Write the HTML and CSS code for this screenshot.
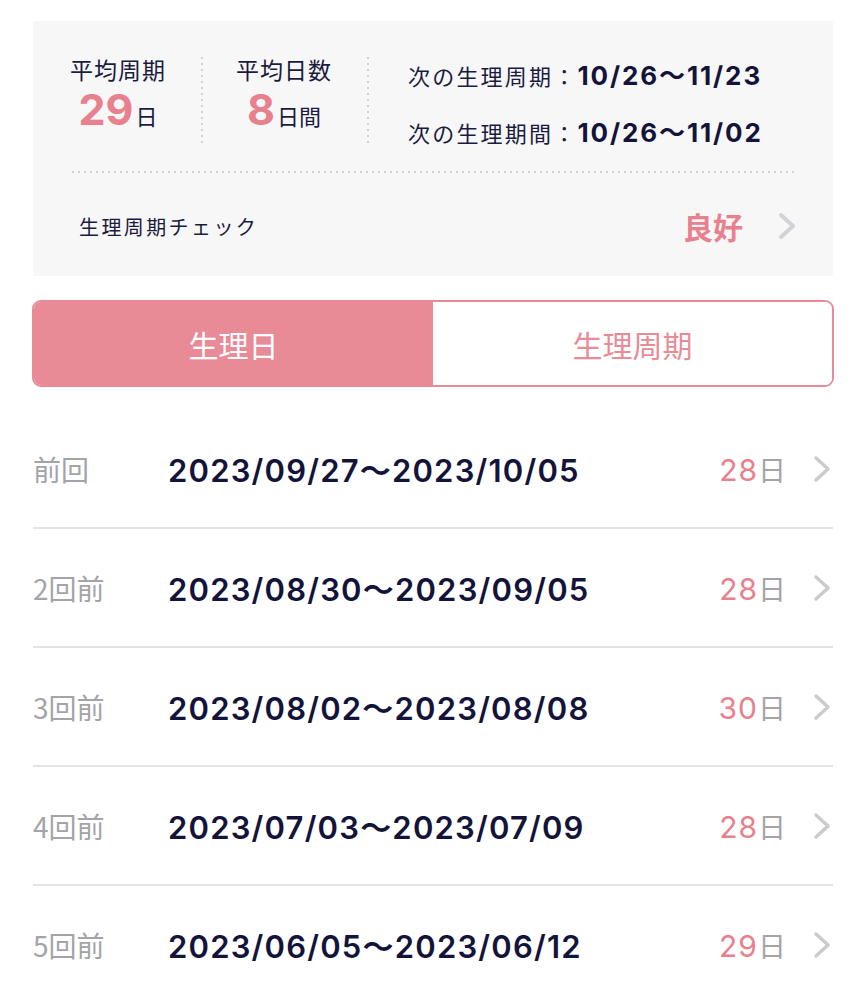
FILE: index.html
```html
<!DOCTYPE html>
<html lang="ja">
  <head>
    <meta charset="UTF-8" />
    <meta name="viewport" content="width=device-width, initial-scale=1.0" />
    <title>生理日</title>
    <link rel="stylesheet" href="styles.css">
  </head>
  <body>
    <div class="page">

      <section class="summary">
        <div class="summary-top">
          <div class="stat">
            <div class="stat-label">平均周期</div>
            <div class="stat-value"><span class="num">29</span>日</div>
          </div>
          <div class="vdots"></div>
          <div class="stat">
            <div class="stat-label">平均日数</div>
            <div class="stat-value"><span class="num">8</span>日間</div>
          </div>
          <div class="vdots"></div>
          <div class="next">
            <div class="next-row"><span class="next-label">次の生理周期：</span><span class="next-date">10/26〜11/23</span></div>
            <div class="next-row"><span class="next-label">次の生理期間：</span><span class="next-date">10/26〜11/02</span></div>
          </div>
        </div>
        <div class="hdots"></div>
        <div class="check">
          <span class="check-label">生理周期チェック</span>
          <span class="check-result">良好</span>
          <svg class="chevron" width="20" height="28" viewBox="0 0 20 28"><polyline points="4,3 16,14 4,25" /></svg>
        </div>
      </section>

      <div class="tabs">
        <div class="tab active">生理日</div>
        <div class="tab">生理周期</div>
      </div>

      <ul class="history">
        <li class="row">
          <span class="row-label">前回</span>
          <span class="row-date">2023/09/27〜2023/10/05</span>
          <span class="row-days"><span class="num">28</span>日</span>
          <svg class="chevron" width="18" height="28" viewBox="0 0 18 28"><polyline points="3,3 15,14 3,25" /></svg>
        </li>
        <li class="row">
          <span class="row-label">2回前</span>
          <span class="row-date">2023/08/30〜2023/09/05</span>
          <span class="row-days"><span class="num">28</span>日</span>
          <svg class="chevron" width="18" height="28" viewBox="0 0 18 28"><polyline points="3,3 15,14 3,25" /></svg>
        </li>
        <li class="row">
          <span class="row-label">3回前</span>
          <span class="row-date">2023/08/02〜2023/08/08</span>
          <span class="row-days"><span class="num">30</span>日</span>
          <svg class="chevron" width="18" height="28" viewBox="0 0 18 28"><polyline points="3,3 15,14 3,25" /></svg>
        </li>
        <li class="row">
          <span class="row-label">4回前</span>
          <span class="row-date">2023/07/03〜2023/07/09</span>
          <span class="row-days"><span class="num">28</span>日</span>
          <svg class="chevron" width="18" height="28" viewBox="0 0 18 28"><polyline points="3,3 15,14 3,25" /></svg>
        </li>
        <li class="row">
          <span class="row-label">5回前</span>
          <span class="row-date">2023/06/05〜2023/06/12</span>
          <span class="row-days"><span class="num">29</span>日</span>
          <svg class="chevron" width="18" height="28" viewBox="0 0 18 28"><polyline points="3,3 15,14 3,25" /></svg>
        </li>
      </ul>

    </div>
  </body>
</html>
```

FILE: styles.css
```css
body {
  margin: 0;
  background: #ffffff;
  font-family: "Noto Sans CJK JP", sans-serif;
  color: #1b1b3f;
}

.page {
  width: 800px;
  padding: 21px 0 0 33px;
}

/* summary card */
.summary {
  background: #f7f7f7;
  padding: 34px 38px 20px 37px;
}

.summary-top {
  display: flex;
  align-items: flex-start;
  height: 92px;
}

.stat {
  display: flex;
  flex-direction: column;
  align-items: center;
}

.stat-label {
  font-size: 23px;
  line-height: 28px;
  letter-spacing: 1px;
}

.stat-value {
  font-size: 22px;
  line-height: 44px;
  margin-top: 4px;
}

.stat-value .num {
  font-family: "Inter", "Liberation Sans", sans-serif;
  font-weight: 700;
  font-size: 43px;
  color: #e8808e;
  margin-right: 2px;
}

.vdots {
  width: 2px;
  height: 88px;
  margin: 2px 33px 0 35px;
  background: repeating-linear-gradient(to bottom, #d2d2d6 0 2px, transparent 2px 6px);
}

.next {
  margin-left: 6px;
  margin-top: 4px;
}

.next-row {
  display: flex;
  align-items: baseline;
  line-height: 32px;
  margin-bottom: 24px;
}

.next-label {
  font-size: 22px;
  letter-spacing: 2.2px;
}

.next-date {
  font-family: "Inter", "Liberation Sans", "Noto Sans CJK JP", sans-serif;
  font-weight: 700;
  font-size: 26px;
  letter-spacing: 1.9px;
  color: #14143a;
}

.hdots {
  height: 2px;
  margin: 24px 0 0 2px;
  background: repeating-linear-gradient(to right, #d2d2d6 0 2px, transparent 2px 6px);
}

.check {
  display: flex;
  align-items: center;
  height: 60px;
  margin-top: 23px;
  padding-left: 9px;
}

.check-label {
  flex: 1;
  font-size: 20px;
  letter-spacing: 2.4px;
}

.check-result {
  font-size: 30px;
  font-weight: 700;
  color: #e8808e;
  margin-right: 34px;
}

.chevron polyline {
  fill: none;
  stroke: #cbcbcf;
  stroke-width: 3.5;
  stroke-linecap: round;
  stroke-linejoin: round;
}

.check .chevron {
  margin-right: -2px;
}

.check .chevron polyline {
  stroke: #d3d3d7;
  stroke-width: 4;
}

/* segmented tabs */
.tabs {
  display: flex;
  margin: 24px -1px 0 -1px;
  height: 83px;
  border: 2px solid #e88b97;
  border-radius: 9px;
  overflow: hidden;
}

.tab {
  flex: 1;
  display: flex;
  align-items: center;
  justify-content: center;
  font-size: 30px;
  color: #e88b97;
  background: #ffffff;
}

.tab.active {
  background: #e88b97;
  color: #ffffff;
}

/* history list */
.history {
  list-style: none;
  margin: 23px 0 0 0;
  padding: 0;
}

.row {
  display: flex;
  align-items: center;
  height: 117px;
  border-bottom: 2px solid #e4e4e6;
}

.row-label {
  width: 135px;
  font-size: 28px;
  color: #a4a4a8;
}

.row-date {
  flex: 1;
  font-family: "Inter", "Liberation Sans", "Noto Sans CJK JP", sans-serif;
  font-weight: 600;
  font-size: 31px;
  letter-spacing: 1.2px;
  color: #14143a;
}

.row-days {
  font-size: 28px;
  color: #a4a4a8;
  margin-right: 27px;
}

.row-days .num {
  font-family: "Inter", "Liberation Sans", sans-serif;
  font-size: 30px;
  letter-spacing: 1px;
  color: #e8808e;
}

.row .chevron {
  margin-right: 2px;
}
```
